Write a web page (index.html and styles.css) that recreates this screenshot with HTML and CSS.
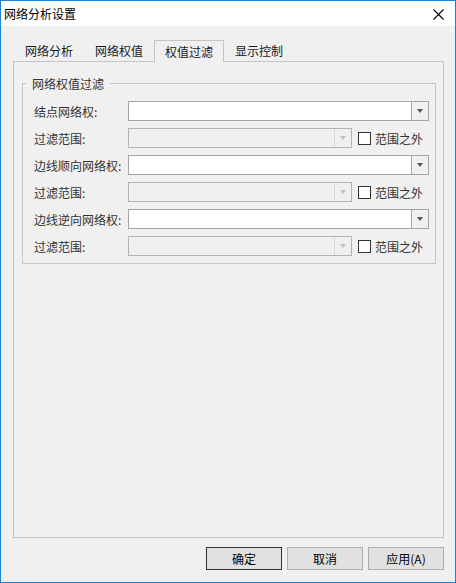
FILE: index.html
```html
<!DOCTYPE html>
<html lang="zh-CN">
<head>
    <meta charset="UTF-8">
    <title>网络分析设置</title>
    <link rel="stylesheet" href="styles.css">
</head>
<body>
    <div class="window">
        <div class="titlebar">
            <span class="title">网络分析设置</span>
            <span class="close">
                <svg width="11" height="11" viewBox="0 0 11 11"><path d="M0.5 0.5 L10.5 10.5 M10.5 0.5 L0.5 10.5" stroke="#000" stroke-width="1.1" fill="none"/></svg>
            </span>
        </div>

        <div class="client">
            <div class="tabs">
                <div class="tab">网络分析</div>
                <div class="tab">网络权值</div>
                <div class="tab active">权值过滤</div>
                <div class="tab">显示控制</div>
            </div>

            <div class="tab-panel">
                <fieldset class="group">
                    <legend>网络权值过滤</legend>

                    <div class="row">
                        <span class="label">结点网络权:</span>
                        <div class="combo">
                            <span class="combo-text"></span>
                            <span class="combo-btn"><i class="arrow"></i></span>
                        </div>
                    </div>
                    <div class="row">
                        <span class="label">过滤范围:</span>
                        <div class="combo short disabled">
                            <span class="combo-text"></span>
                            <span class="combo-btn"><i class="arrow"></i></span>
                        </div>
                        <span class="check"><span class="box"></span>范围之外</span>
                    </div>

                    <div class="row">
                        <span class="label">边线顺向网络权:</span>
                        <div class="combo">
                            <span class="combo-text"></span>
                            <span class="combo-btn"><i class="arrow"></i></span>
                        </div>
                    </div>
                    <div class="row">
                        <span class="label">过滤范围:</span>
                        <div class="combo short disabled">
                            <span class="combo-text"></span>
                            <span class="combo-btn"><i class="arrow"></i></span>
                        </div>
                        <span class="check"><span class="box"></span>范围之外</span>
                    </div>

                    <div class="row">
                        <span class="label">边线逆向网络权:</span>
                        <div class="combo">
                            <span class="combo-text"></span>
                            <span class="combo-btn"><i class="arrow"></i></span>
                        </div>
                    </div>
                    <div class="row">
                        <span class="label">过滤范围:</span>
                        <div class="combo short disabled">
                            <span class="combo-text"></span>
                            <span class="combo-btn"><i class="arrow"></i></span>
                        </div>
                        <span class="check"><span class="box"></span>范围之外</span>
                    </div>
                </fieldset>
            </div>

            <div class="buttons">
                <button type="button" class="btn default">确定</button>
                <button type="button" class="btn">取消</button>
                <button type="button" class="btn">应用(A)</button>
            </div>
        </div>
    </div>
</body>
</html>
```

FILE: styles.css
```css
body {
    margin: 0;
    padding: 0;
    background-color: #f0f0f0;
    font-family: "Noto Sans CJK SC", "Liberation Sans", sans-serif;
    font-size: 12px;
    color: #000;
}
.window {
    width: 456px;
    height: 583px;
    box-sizing: border-box;
    border: 1px solid #1883d7;
    background-color: #f0f0f0;
    display: flex;
    flex-direction: column;
}
.titlebar {
    height: 25px;
    background: #fff;
    display: flex;
    align-items: center;
    justify-content: space-between;
    padding: 0 11px 0 3px;
}
.title {
    line-height: 17px;
    margin-top: -1px;
}
.close {
    display: flex;
    margin-top: 1px;
}
.client {
    flex: 1;
    display: flex;
    flex-direction: column;
    padding: 14px 11px 12px 12px;
}

/* tabs */
.tabs {
    display: flex;
    align-items: flex-end;
    height: 21px;
    padding-left: 1px;
}
.tab {
    height: 21px;
    line-height: 22px;
    padding: 0 11px;
    color: #1a1a1a;
    box-sizing: border-box;
}
.tab.active {
    height: 22px;
    margin-bottom: -1px;
    border: 1px solid #c4c4c4;
    border-bottom: none;
    background: #f0f0f0;
    padding: 0 10px;
    line-height: 21px;
    position: relative;
    z-index: 1;
}
.tab-panel {
    height: 477px;
    box-sizing: border-box;
    border: 1px solid #c4c4c4;
    padding: 13px 7px 0 8px;
}

/* group box */
.group {
    margin: 0;
    border: 1px solid #c6c6c6;
    padding: 9px 6px 7px 11px;
    display: flex;
    flex-direction: column;
    gap: 7px;
}
.group legend {
    padding: 0 6px;
    margin-left: -8px;
    line-height: 17px;
    color: #333;
}
.row {
    display: flex;
    align-items: center;
    height: 20px;
}
.label {
    width: 94px;
    flex-shrink: 0;
    color: #333;
    white-space: nowrap;
}

/* combo box */
.combo {
    flex: 1;
    height: 20px;
    box-sizing: border-box;
    border: 1px solid #a5a5a5;
    background: #fff;
    display: flex;
}
.combo-text {
    flex: 1;
}
.combo-btn {
    width: 16px;
    border-left: 1px solid #a5a5a5;
    background: #f0f0f0;
    display: flex;
    align-items: center;
    justify-content: center;
}
.arrow {
    width: 0;
    height: 0;
    border-left: 3.5px solid transparent;
    border-right: 3.5px solid transparent;
    border-top: 4px solid #555;
}
.combo.short {
    flex: none;
    width: 224px;
}
.combo.disabled {
    background: #f0f0f0;
    border-color: #b4b4b4;
}
.combo.disabled .combo-btn {
    border-left-color: #d9d9d9;
}
.combo.disabled .arrow {
    border-top-color: #c2c2c2;
}

/* checkbox */
.check {
    display: flex;
    align-items: center;
    margin-left: 6px;
    color: #333;
    white-space: nowrap;
}
.box {
    width: 13px;
    height: 13px;
    box-sizing: border-box;
    border: 1px solid #333;
    background: #fff;
    margin-right: 4px;
}

/* dialog buttons */
.buttons {
    display: flex;
    justify-content: flex-end;
    gap: 5px;
    margin-top: 9px;
}
.btn {
    width: 76px;
    height: 23px;
    padding: 0;
    font-family: inherit;
    font-size: 12px;
    color: #000;
    background: #e1e1e1;
    border: 1px solid #adadad;
}
.btn.default {
    border-color: #333;
}
```
